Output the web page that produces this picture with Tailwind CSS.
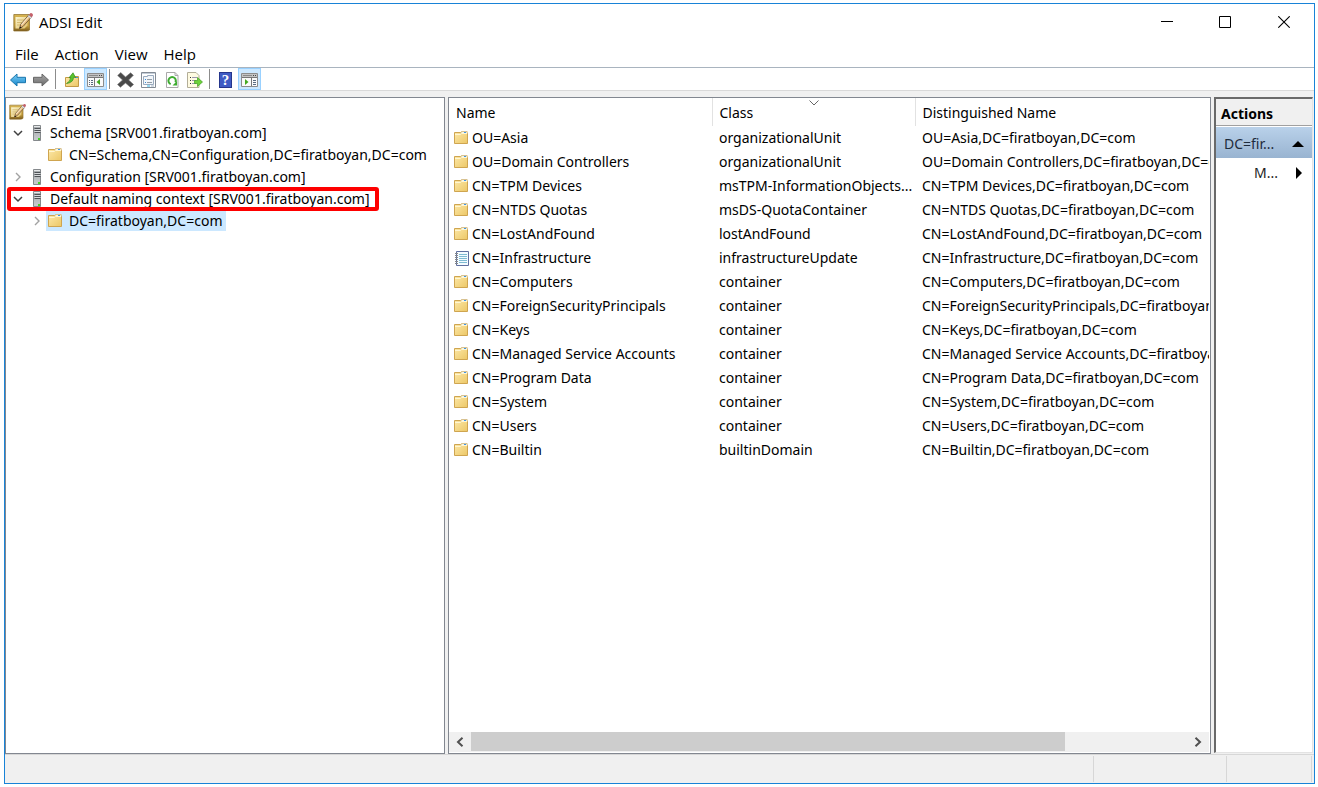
<!DOCTYPE html>
<html lang="en">
<head>
<meta charset="utf-8">
<title>ADSI Edit</title>
<script src="https://cdn.jsdelivr.net/npm/@tailwindcss/browser@4"></script>
</head>
<body class="bg-white text-black font-['Noto_Sans','Open_Sans',sans-serif] text-[14px] leading-[22px]">
<svg class="absolute size-0" aria-hidden="true">
  <defs>
    <linearGradient id="gold" x1="0" y1="0" x2="1" y2="1"><stop offset="0" stop-color="#fde9a9"/><stop offset="1" stop-color="#ecc766"/></linearGradient>
    <linearGradient id="pad" x1="0" y1="0" x2="0" y2="1"><stop offset="0" stop-color="#d8b552"/><stop offset=".7" stop-color="#c09a3c"/><stop offset="1" stop-color="#7a5a1c"/></linearGradient>
    <linearGradient id="sheen" x1="0" y1="0" x2="1" y2="1"><stop offset="0" stop-color="#fbf5d0"/><stop offset="1" stop-color="#e0c069"/></linearGradient>
    <linearGradient id="blue" x1="0" y1="0" x2="0" y2="1"><stop offset="0" stop-color="#7fd0f5"/><stop offset="1" stop-color="#1585cc"/></linearGradient>
    <linearGradient id="grey" x1="0" y1="0" x2="0" y2="1"><stop offset="0" stop-color="#a8a8a8"/><stop offset="1" stop-color="#6a6a6a"/></linearGradient>
    <linearGradient id="steel" x1="0" y1="0" x2="0" y2="1"><stop offset="0" stop-color="#a4a8ab"/><stop offset="1" stop-color="#c9cdcf"/></linearGradient>
    <symbol id="folder" viewBox="0 0 14 14"><path d="M.5 1.500h6.200l1-1h5.300v2h.5v10H.5z" fill="url(#gold)" stroke="#cfa550"/><path d="M7.500 .5h5.500v2H7z" fill="#f8f3df" stroke="#cdb98a" stroke-width=".5"/><path d="M10 1h2v1h-2z" fill="#3f95e6"/><path d="M1 3.500h5.500l1-1h5.500" stroke="#fff6d2" fill="none"/></symbol>
    <symbol id="server" viewBox="0 0 8 16"><path d="M.5 .5h7v15h-7z" fill="url(#steel)" stroke="#85898c"/><path d="M1 1h6v1H1z" fill="#e6e8e9"/><path d="M1.500 3.500h6M1.500 5.500h6M1.500 7.500h6" stroke="#4f5357"/><path d="M1.500 4.500h6M1.500 6.500h6" stroke="#d6d9db"/><path d="M5 13h2v2H5z" fill="#45d028"/></symbol>
    <symbol id="notepad" viewBox="0 0 20 20"><path d="M.8 2.500h15.700v15.500q-1 1-3 1H.8z" fill="url(#pad)" stroke="#8a6a25" stroke-width=".7"/><path d="M2.500 5h12v8.500l-3 3h-9z" fill="url(#sheen)"/><path d="M4 8h7M4 10.500h5M4 13h3" stroke="#c9a95a" stroke-width=".7"/><path d="M6.500 16.500l1.300-4.300L15.500 3.300l2.500 2.200-8 9z" fill="#e8bb7c" stroke="#5d452a" stroke-width=".8"/><path d="M8 12.500l7.500-8.500.8.8-7.300 8.500z" fill="#f8e6c4"/><path d="M16.500 2.300q1.200-2 2.700-.7t.1 2.900l-.8.9-2.700-2.300z" fill="#c4616b"/><path d="M14.700 4.200l2.700 2.400 1.100-1.200-2.700-2.400z" fill="#dfe2e6" stroke="#8d8f94" stroke-width=".4"/><path d="M6.500 16.500l.6-1.900 1.500 1.200z" fill="#111"/></symbol>
    <symbol id="sheet" viewBox="0 0 15 15"><path d="M2.500 .5h12v14h-12z" fill="#f4fbff" stroke="#5f6f9f"/><path d="M5 3.500h8M5 5.500h8M5 7.500h8M5 9.500h8M5 11.500h8" stroke="#7fbbd2"/><path d="M1 2.500h3M1 4.500h3M1 6.500h3M1 8.500h3M1 10.500h3M1 12.500h3" stroke="#83878b"/></symbol>
    <symbol id="open" viewBox="0 0 10 10"><path d="M1 3l4 4 4-4" fill="none" stroke="#404040" stroke-width="1.500"/></symbol>
    <symbol id="closed" viewBox="0 0 10 10"><path d="M3 1l4 4-4 4" fill="none" stroke="#a2a2a2" stroke-width="1.400"/></symbol>
  </defs>
</svg>
<div class="h-screen pl-1 pt-[3px] pr-[3px] pb-[3px]">
<div class="h-full flex flex-col border border-[#1883d7] bg-white">
  <header class="flex h-9 shrink-0 items-center pl-2">
    <svg class="size-5"><use href="#notepad"/></svg>
    <h1 class="ml-[6px] grow font-['Open_Sans',sans-serif] text-[15px]">ADSI Edit</h1>
    <button aria-label="Minimize" class="grid h-full w-[58px] place-items-center"><svg class="size-3" viewBox="0 0 12 12"><path d="M0 5.500h12" stroke="#000"/></svg></button>
    <button aria-label="Maximize" class="grid h-full w-[58px] place-items-center"><svg class="size-3" viewBox="0 0 12 12"><path d="M.5 .5h11v11H.5z" fill="none" stroke="#000"/></svg></button>
    <button aria-label="Close" class="grid h-full w-[60px] place-items-center"><svg class="size-3" viewBox="0 0 12 12"><path d="M.3 .3l11.400 11.400M11.700 .3L.3 11.700" stroke="#000" stroke-width="1.100"/></svg></button>
  </header>
  <nav class="flex h-7 shrink-0 items-center gap-4 border-b border-[#a9b4bf] pt-px pl-[10px] font-['Open_Sans',sans-serif] text-[15px]">
    <button>File</button><button>Action</button><button>View</button><button>Help</button>
  </nav>
  <div role="toolbar" class="flex h-[23px] shrink-0 items-center border-b border-[#d9d9d9] pl-px *:shrink-0">
    <button aria-label="Back" class="grid h-[22px] w-[23px] place-items-center pt-px"><svg class="size-4" viewBox="0 0 16 16"><path d="M.5 8L7 2v3.300h8.500v5.400H7V14z" fill="url(#blue)" stroke="#1976ad"/></svg></button>
    <button aria-label="Forward" class="grid h-[22px] w-[23px] place-items-center pt-px"><svg class="size-4" viewBox="0 0 16 16"><path d="M15.500 8L9 2v3.300H.5v5.400H9V14z" fill="url(#grey)" stroke="#666"/></svg></button>
    <span class="mr-1 ml-[3px] h-5 w-px bg-[#8c8c8c]"></span>
    <button aria-label="Up one level" class="grid h-[22px] w-6 place-items-center pt-px pr-px"><svg class="size-4" viewBox="0 0 16 16"><path d="M1.500 5.500h5l1-1h7v10h-13z" fill="url(#gold)" stroke="#c39a45"/><path d="M11 5h3v1h-3z" fill="#4593dc"/><path d="M2.500 11.500Q6.500 9.500 6.800 5.500L5 5.800 9 .8 11.500 5.500 9.500 5.300Q9.500 10.500 2.500 11.500z" fill="#59c52f" stroke="#318b18" stroke-width=".7"/></svg></button>
    <button aria-label="Show/Hide Console Tree" aria-pressed="true" class="grid h-[22px] w-[23px] place-items-center border border-[#99d1ff] bg-[#cce8ff] pt-px"><svg class="h-4 w-[17px]" viewBox="0 0 17 16"><path d="M.5 1.500h16v13H.5z" fill="#fafafa" stroke="#8c8c8c"/><path d="M1 2h15v3H1z" fill="#c4c4c4"/><path d="M1 5.500h15M7.500 6v8" stroke="#777"/><path d="M2 3.500h9" stroke="#8a8a8a"/><path d="M12 3h1v1h-1zM14 3h1v1h-1z" fill="#444"/><path d="M2 8.500h1M2 10.500h1M2 12.500h1M4 8.500h2M4 10.500h2M4 12.500h2" stroke="#586a80"/><path d="M13 7v6L9.500 10z" fill="#42a81f"/></svg></button>
    <span class="mr-[4px] ml-[2px] h-5 w-px bg-[#8c8c8c]"></span>
    <button aria-label="Delete" class="grid h-[22px] w-[23px] place-items-center pt-px"><svg class="h-4 w-[17px]" viewBox="0 0 16 16" preserveAspectRatio="none"><path d="M.6 3.500L3.500 .6 8 5 12.800 .8l2.600 2.500L11 8l4.600 4.500-2.900 2.800L8 11 3.200 15.300 .5 12.500 5.200 8z" fill="#4a4a4a" stroke="#777" stroke-width=".6"/></svg></button>
    <button aria-label="Properties" class="grid h-[22px] w-[23px] place-items-center pt-px"><svg class="size-4" viewBox="0 0 16 16"><path d="M.5 .5h14v15H.5z" fill="#fff" stroke="#838b95"/><path d="M1 1.500h13" stroke="#c3cdd8"/><path d="M2.500 4.500h4v-1h6v9h-10z" fill="#f2f6fa" stroke="#9aabbf"/><path d="M4 7.500h1M4 10.500h1" stroke="#368ddb"/><path d="M6 7.500h5M6 10.500h5" stroke="#929ca6"/><path d="M6 14h3" stroke="#36b6e8"/><path d="M10 14h3" stroke="#a3b3c4"/></svg></button>
    <button aria-label="Refresh" class="grid h-[22px] w-[23px] place-items-center pt-px"><svg class="size-4" viewBox="0 0 16 16"><path d="M2.500 .5h8.500l3 3v12H2.500z" fill="#fff" stroke="#a9a9a9"/><path d="M11 .5v3h3" fill="none" stroke="#a9a9a9"/><path d="M6.700 12.200A3.700 3.700 0 1 1 11.500 10.300" fill="none" stroke="#3fac31" stroke-width="2"/><path d="M13 9v4.500H8.500z" fill="#3fac31"/></svg></button>
    <button aria-label="Export List" class="grid h-[22px] w-[23px] place-items-center pt-px"><svg class="size-4" viewBox="0 0 16 16"><path d="M.5 .5h8.500l3 3v12H.5z" fill="#fffbe2" stroke="#b3ae98"/><path d="M3 5.500h1M3 8.500h1M3 11.500h1" stroke="#333"/><path d="M5 5.500h5M5 8.500h4M5 11.500h4" stroke="#9b97b2"/><path d="M7.500 8.500h3V5.500L15.500 10 10.500 14.500v-3h-3z" fill="#6dd13b" stroke="#409e22" stroke-width=".7"/></svg></button>
    <span class="mr-1 ml-[3px] h-5 w-px bg-[#8c8c8c]"></span>
    <button aria-label="Help" class="grid h-[22px] w-6 place-items-center pt-px pr-px"><span class="grid h-4 w-[13px] place-items-center border border-[#26368c] bg-[#3f5bc4] font-['Liberation_Serif',serif] text-[15px] leading-[14px] font-bold text-white">?</span></button>
    <button aria-label="Show/Hide Action Pane" aria-pressed="true" class="grid h-[22px] w-[23px] place-items-center border border-[#99d1ff] bg-[#cce8ff] pt-px"><svg class="h-4 w-[17px]" viewBox="0 0 17 16"><path d="M.5 1.500h16v13H.5z" fill="#fafafa" stroke="#8c8c8c"/><path d="M1 2h15v3H1z" fill="#c4c4c4"/><path d="M1 5.500h15M10.500 6v8" stroke="#777"/><path d="M2 3.500h9" stroke="#8a8a8a"/><path d="M12 3h1v1h-1zM14 3h1v1h-1z" fill="#444"/><path d="M12 8.500h3M12 10.500h3M12 12.500h3" stroke="#586a80"/><path d="M4 7v6l3.500-3z" fill="#42a81f"/></svg></button>
  </div>
  <main class="flex min-h-0 grow bg-[#f0f0f0] pt-[6px] pr-px">
    <section aria-label="Console tree" class="w-[440px] shrink-0 overflow-hidden border border-[#828790] bg-white pt-[2px]">
      <ul class="whitespace-nowrap">
        <li class="flex h-[22px] items-center pl-[3px]"><svg class="size-[17px]"><use href="#notepad"/></svg><span class="ml-[5px]">ADSI Edit</span></li>
        <li class="flex h-[22px] items-center pl-[7px]"><svg class="size-[10px]"><use href="#open"/></svg><svg class="ml-[10px] h-4 w-2"><use href="#server"/></svg><span class="ml-[9px]">Schema [SRV001.firatboyan.com]</span></li>
        <li class="flex h-[22px] items-center pl-[42px]"><svg class="size-[14px]"><use href="#folder"/></svg><span class="ml-[7px]">CN=Schema,CN=Configuration,DC=firatboyan,DC=com</span></li>
        <li class="flex h-[22px] items-center pl-[7px]"><svg class="size-[10px]"><use href="#closed"/></svg><svg class="ml-[10px] h-4 w-2"><use href="#server"/></svg><span class="ml-[9px]">Configuration [SRV001.firatboyan.com]</span></li>
        <li class="relative flex h-[22px] items-center pl-[7px]"><svg class="size-[10px]"><use href="#open"/></svg><svg class="ml-[10px] h-4 w-2"><use href="#server"/></svg><span class="ml-[9px]">Default naming context [SRV001.firatboyan.com]</span><span class="absolute -inset-y-px left-px w-[372px] rounded-[3px] border-4 border-[#fe0000]"></span></li>
        <li class="flex h-[22px] items-center pl-[26px]"><svg class="size-[10px]"><use href="#closed"/></svg><span class="ml-[4px] flex h-5 items-center bg-[#cce8ff] pr-1 pl-[2px]"><svg class="size-[14px]"><use href="#folder"/></svg><span class="ml-[7px]">DC=firatboyan,DC=com</span></span></li>
      </ul>
    </section>
    <section aria-label="Objects" class="ml-[3px] flex min-w-0 grow flex-col border border-[#828790] bg-white">
      <div class="mr-px min-h-0 grow overflow-hidden">
      <table class="w-full table-fixed border-collapse whitespace-nowrap text-left">
        <colgroup><col class="w-[263px]"><col class="w-[203px]"><col></colgroup>
        <thead><tr class="h-7 *:font-normal"><th class="border-r border-[#e2e2e2] pt-[2px] pl-[7px]">Name</th><th class="relative border-r border-[#e2e2e2] pt-[2px] pl-[7px]" aria-sort="descending">Class<svg class="absolute inset-x-0 top-[2px] mx-auto h-[6px] w-[10px]" viewBox="0 0 10 6"><path d="M.5 .5L5 5 9.500 .5" fill="none" stroke="#666"/></svg></th><th class="pt-[2px] pl-[7px]">Distinguished Name</th></tr></thead>
        <tbody id="rows"></tbody>
      </table>
      </div>
      <div class="mr-px mb-px flex h-5 shrink-0 items-center bg-[#f0f0f0]">
        <button aria-label="Scroll left" class="grid h-5 w-[22px] shrink-0 place-items-center pr-px"><svg class="size-[10px]" viewBox="0 0 10 10"><path d="M7.500 .8L3 5l4.500 4.200" fill="none" stroke="#505050" stroke-width="2"/></svg></button>
        <div class="flex h-full grow"><div class="h-[19px] w-[83%] bg-[#cdcdcd]"></div></div>
        <button aria-label="Scroll right" class="grid h-5 w-[22px] shrink-0 place-items-center"><svg class="size-[10px]" viewBox="0 0 10 10"><path d="M2.500 .8L7 5 2.500 9.200" fill="none" stroke="#505050" stroke-width="2"/></svg></button>
      </div>
    </section>
    <aside class="ml-[3px] mb-px w-[99px] shrink-0 border-t-2 border-l-2 border-r border-b border-t-[#696969] border-l-[#696969] border-r-[#e3e3e3] border-b-[#e3e3e3] bg-white">
      <h2 class="mb-px flex h-[27px] items-center border-b border-[#a0a0a0] bg-[#f0f0f0] pt-1 pl-[5px] font-bold">Actions</h2>
      <button class="flex h-[31px] w-full items-center justify-between bg-linear-to-b from-[#b9d1ea] to-[#99b4d1] pt-[2px] pr-[8px] pl-2 text-[#1e2b3c]"><span>DC=fir...</span><svg class="h-[6px] w-3" viewBox="0 0 12 6"><path d="M6 0l6 6H0z" fill="#000"/></svg></button>
      <button class="flex h-[29px] w-full items-center justify-between pt-px pr-[10px] pl-[38px] text-[#1e1e1e]"><span>M...</span><svg class="h-3 w-[6px]" viewBox="0 0 6 12"><path d="M0 0l6 6-6 6z" fill="#000"/></svg></button>
    </aside>
  </main>
  <footer class="flex h-[29px] shrink-0 justify-end border-t border-[#d7d7d7] bg-[#f0f0f0] py-px pr-[2px]">
    <span class="w-[133px] border-l border-[#d7d7d7]"></span><span class="w-[86px] border-x border-[#d7d7d7]"></span>
  </footer>
</div>
</div>
<script>
const base = ',DC=firatboyan,DC=com';
const items = [
  ['OU=Asia', 'organizationalUnit'],
  ['OU=Domain Controllers', 'organizationalUnit'],
  ['CN=TPM Devices', 'msTPM-InformationObjects...'],
  ['CN=NTDS Quotas', 'msDS-QuotaContainer'],
  ['CN=LostAndFound', 'lostAndFound'],
  ['CN=Infrastructure', 'infrastructureUpdate'],
  ['CN=Computers', 'container'],
  ['CN=ForeignSecurityPrincipals', 'container'],
  ['CN=Keys', 'container'],
  ['CN=Managed Service Accounts', 'container'],
  ['CN=Program Data', 'container'],
  ['CN=System', 'container'],
  ['CN=Users', 'container'],
  ['CN=Builtin', 'builtinDomain']
];
document.getElementById('rows').innerHTML = items.map(([name, type]) => `<tr class="h-6">
  <td class="p-0"><span class="flex items-center pl-[5px]">${name === 'CN=Infrastructure'
    ? '<svg class="mr-[3px] size-[15px]"><use href="#sheet"/></svg>'
    : '<svg class="mr-1 size-[14px]"><use href="#folder"/></svg>'}${name}</span></td>
  <td class="p-0 pl-[7px]">${type}</td>
  <td class="p-0 pl-[7px]">${name}${base}</td></tr>`).join('');
</script>
</body>
</html>
